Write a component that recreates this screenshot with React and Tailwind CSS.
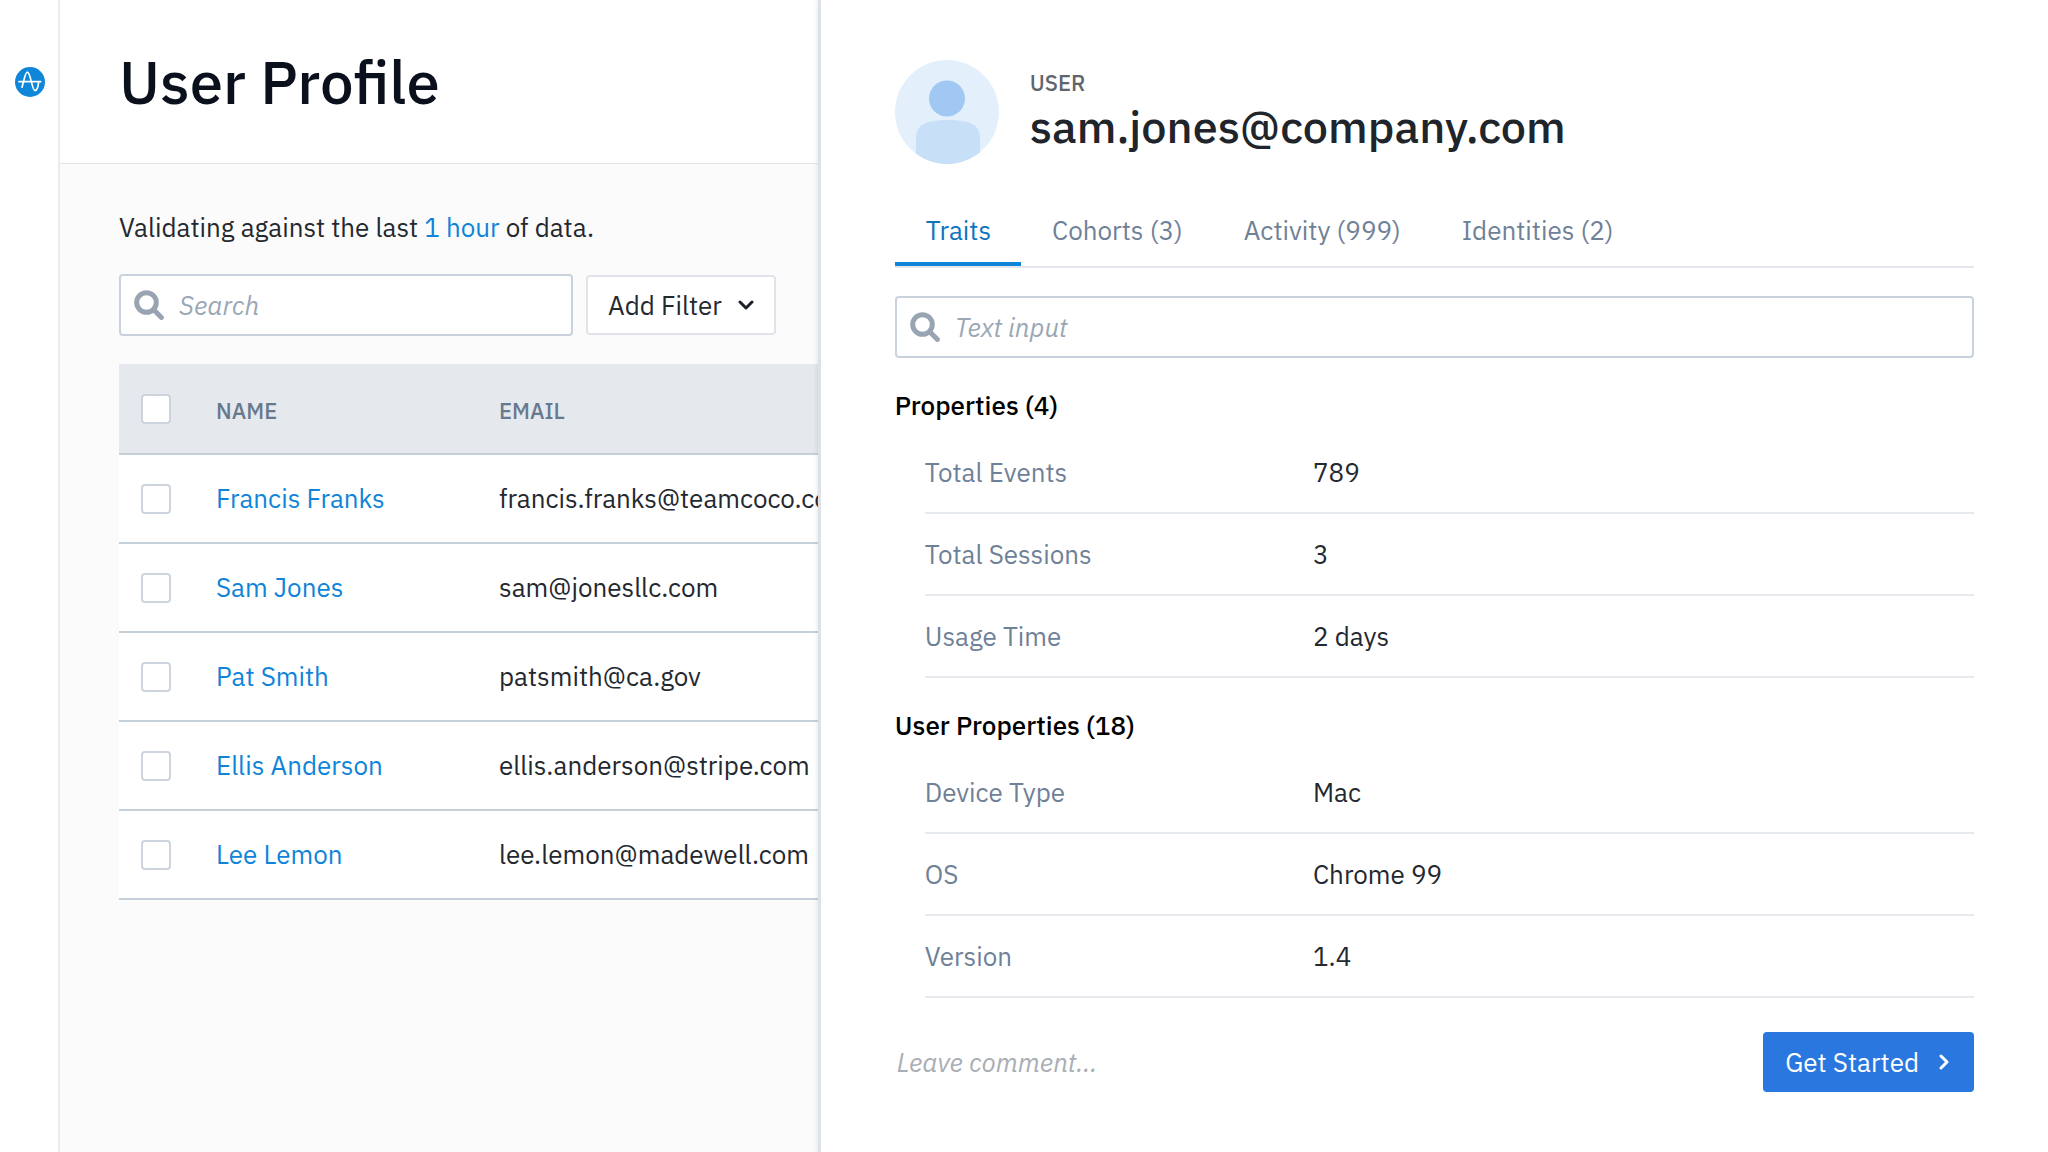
import React from "react";

const users = [
  { name: "Francis Franks", email: "francis.franks@teamcoco.com" },
  { name: "Sam Jones", email: "sam@jonesllc.com" },
  { name: "Pat Smith", email: "patsmith@ca.gov" },
  { name: "Ellis Anderson", email: "ellis.anderson@stripe.com" },
  { name: "Lee Lemon", email: "lee.lemon@madewell.com" },
];

const tabs = ["Traits", "Cohorts (3)", "Activity (999)", "Identities (2)"];

const sections = [
  {
    title: "Properties (4)",
    rows: [["Total Events", "789"], ["Total Sessions", "3"], ["Usage Time", "2 days"]],
  },
  {
    title: "User Properties (18)",
    rows: [["Device Type", "Mac"], ["OS", "Chrome 99"], ["Version", "1.4"]],
  },
];

function Logo() {
  return (
    <svg className="size-[30px]" viewBox="0 0 30 30" fill="none" aria-label="Home">
      <circle cx="15" cy="15" r="15" fill="#0f86d8" />
      <path
        d="M4 14.7H25.7M7 20.2C8.6 15.5 10 5.2 12.4 5.2C15.6 5.2 17 23.7 20 23.7C22 23.7 23 20 23.5 16.2"
        stroke="#fff"
        strokeWidth="1.7"
        strokeLinecap="round"
      />
    </svg>
  );
}

function SearchIcon() {
  return (
    <svg className="size-[30px] shrink-0" viewBox="0 0 30 30" fill="none" stroke="#98a4b1" strokeWidth="5" aria-hidden="true">
      <circle cx="12.5" cy="12.5" r="9.8" />
      <path d="M20 20L27.4 27.4" strokeLinecap="round" />
    </svg>
  );
}

function Avatar() {
  return (
    <svg className="size-[104px] shrink-0" viewBox="0 0 104 104" aria-hidden="true">
      <defs>
        <clipPath id="avatar-circle">
          <circle cx="52" cy="52" r="52" />
        </clipPath>
      </defs>
      <g clipPath="url(#avatar-circle)">
        <rect width="104" height="104" fill="#e3f0fb" />
        <circle cx="52" cy="38.5" r="18" fill="#a1c7f3" />
        <path d="M21 78C21 65 31 60 53 60C75 60 85 65 85 78V104H21Z" fill="#c8dff8" />
      </g>
    </svg>
  );
}

function SearchField({ label, placeholder, className }) {
  return (
    <label className={"flex h-[62px] items-center gap-[15px] rounded-sm border-2 border-[#c9d2dc] bg-white px-[13px] " + className}>
      <SearchIcon />
      <span className="sr-only">{label}</span>
      <input
        type="text"
        placeholder={placeholder}
        className="w-full min-w-0 bg-transparent italic leading-8 outline-none placeholder:text-[#9aa7b5]"
      />
    </label>
  );
}

function Check({ label }) {
  return (
    <input
      type="checkbox"
      aria-label={label}
      className="block size-[30px] appearance-none rounded-sm border-2 border-[#cdd4de] bg-white"
    />
  );
}

function UserList() {
  return (
    <main className="w-[37%] shrink-0 overflow-hidden bg-[#fbfbfb]">
      <header className="border-b border-[#e3e5e8] bg-white pt-[46px] pb-[45px] pl-[59px]">
        <h1 className="text-[60px] leading-[72px] font-medium whitespace-nowrap text-[#0b111c]">User Profile</h1>
      </header>
      <div className="pt-[47px] pl-[59px]">
        <p className="leading-8 whitespace-nowrap">
          Validating against the last <a href="#range" className="text-[#0f84d9]">1 hour</a> of data.
        </p>
        <div className="mt-[31px] flex items-center gap-[13px]">
          <SearchField label="Search users" placeholder="Search" className="w-[454px]" />
          <button className="flex h-[60px] items-center gap-[16px] rounded-sm border-2 border-[#e0e3e9] bg-white px-5 whitespace-nowrap">
            Add Filter
            <svg className="h-3 w-4" viewBox="0 0 16 12" fill="none" stroke="#1b1f27" strokeWidth="3" strokeLinecap="round" strokeLinejoin="round" aria-hidden="true">
              <path d="M2 3L8 9L14 3" />
            </svg>
          </button>
        </div>
        <table className="mt-7 w-full table-fixed border-collapse text-left">
          <thead>
            <tr className="h-[90px] border-b-2 border-[#c5d0db] bg-[#e5e8ed] text-[22px] text-[#68798d]">
              <th className="w-[97px] pl-[22px]"><Check label="Select all users" /></th>
              <th className="w-[283px] pt-[3px] font-medium">NAME</th>
              <th className="pt-[3px] font-medium">EMAIL</th>
            </tr>
          </thead>
          <tbody>
            {users.map((u) => (
              <tr key={u.name} className="h-[89px] border-b-2 border-[#c5d0db] bg-white">
                <td className="pl-[22px]"><Check label={"Select " + u.name} /></td>
                <td><a href="#user" className="text-[#0f84d9]">{u.name}</a></td>
                <td className="whitespace-nowrap">{u.email}</td>
              </tr>
            ))}
          </tbody>
        </table>
      </div>
    </main>
  );
}

function UserPanel() {
  return (
    <section className="relative min-w-0 flex-1 border-l-[3px] border-[#dee1e6] bg-white px-[74px] pt-[60px] pb-[59px] shadow-[-1px_0_4px_rgba(60,75,100,0.12)]">
      <header className="flex items-center gap-[31px]">
        <Avatar />
        <div>
          <p className="text-[22px] leading-7 font-medium text-[#5f656d]">USER</p>
          <h2 className="text-[45px] leading-[58px] font-medium text-[#20242b]">sam.jones@company.com</h2>
        </div>
      </header>
      <div role="tablist" className="mt-8 flex border-b-2 border-[#e4e8ee]">
        {tabs.map((tab, i) => (
          <button
            key={tab}
            role="tab"
            aria-selected={i === 0}
            className={
              "border-b-4 pt-[18px] pr-[30px] pb-4 pl-[31px] leading-8 " +
              (i === 0 ? "border-[#0f84d9] text-[#0d74bd]" : "border-transparent text-[#6f8197]")
            }
          >
            {tab}
          </button>
        ))}
      </div>
      <SearchField label="Filter traits" placeholder="Text input" className="mt-7" />
      {sections.map((s) => (
        <section key={s.title}>
          <h3 className="mt-[31px] leading-8 font-medium text-black">{s.title}</h3>
          <dl className="mt-[11px] ml-[30px]">
            {s.rows.map(([label, value]) => (
              <div key={label} className="flex h-[82px] items-center border-b-2 border-[#e7eaef]">
                <dt className="w-[37%] text-[#6f8197]">{label}</dt>
                <dd>{value}</dd>
              </div>
            ))}
          </dl>
        </section>
      ))}
      <footer className="mt-[34px] flex items-center justify-between">
        <input
          type="text"
          aria-label="Leave comment"
          placeholder="Leave comment..."
          className="min-w-0 flex-1 bg-transparent pl-0.5 italic leading-8 outline-none placeholder:text-[#a9adb4]"
        />
        <button className="flex h-[60px] items-center gap-5 rounded-sm bg-[#2977df] pr-[25px] pl-[22px] text-white">
          Get Started
          <svg className="h-4 w-2.5" viewBox="0 0 10 16" fill="none" stroke="currentColor" strokeWidth="3" strokeLinecap="round" strokeLinejoin="round" aria-hidden="true">
            <path d="M2 2L8 8L2 14" />
          </svg>
        </button>
      </footer>
    </section>
  );
}

export default function App() {
  return (
    <div className="flex min-h-screen overflow-hidden bg-white font-['IBM_Plex_Sans',Roboto,sans-serif] text-[26px] text-[#24282f]">
      <nav className="w-[60px] shrink-0 border-r-2 border-[#ebebf2] bg-white pt-[67px] pl-[15px]">
        <a href="#home" className="block size-[30px]"><Logo /></a>
      </nav>
      <UserList />
      <UserPanel />
    </div>
  );
}
